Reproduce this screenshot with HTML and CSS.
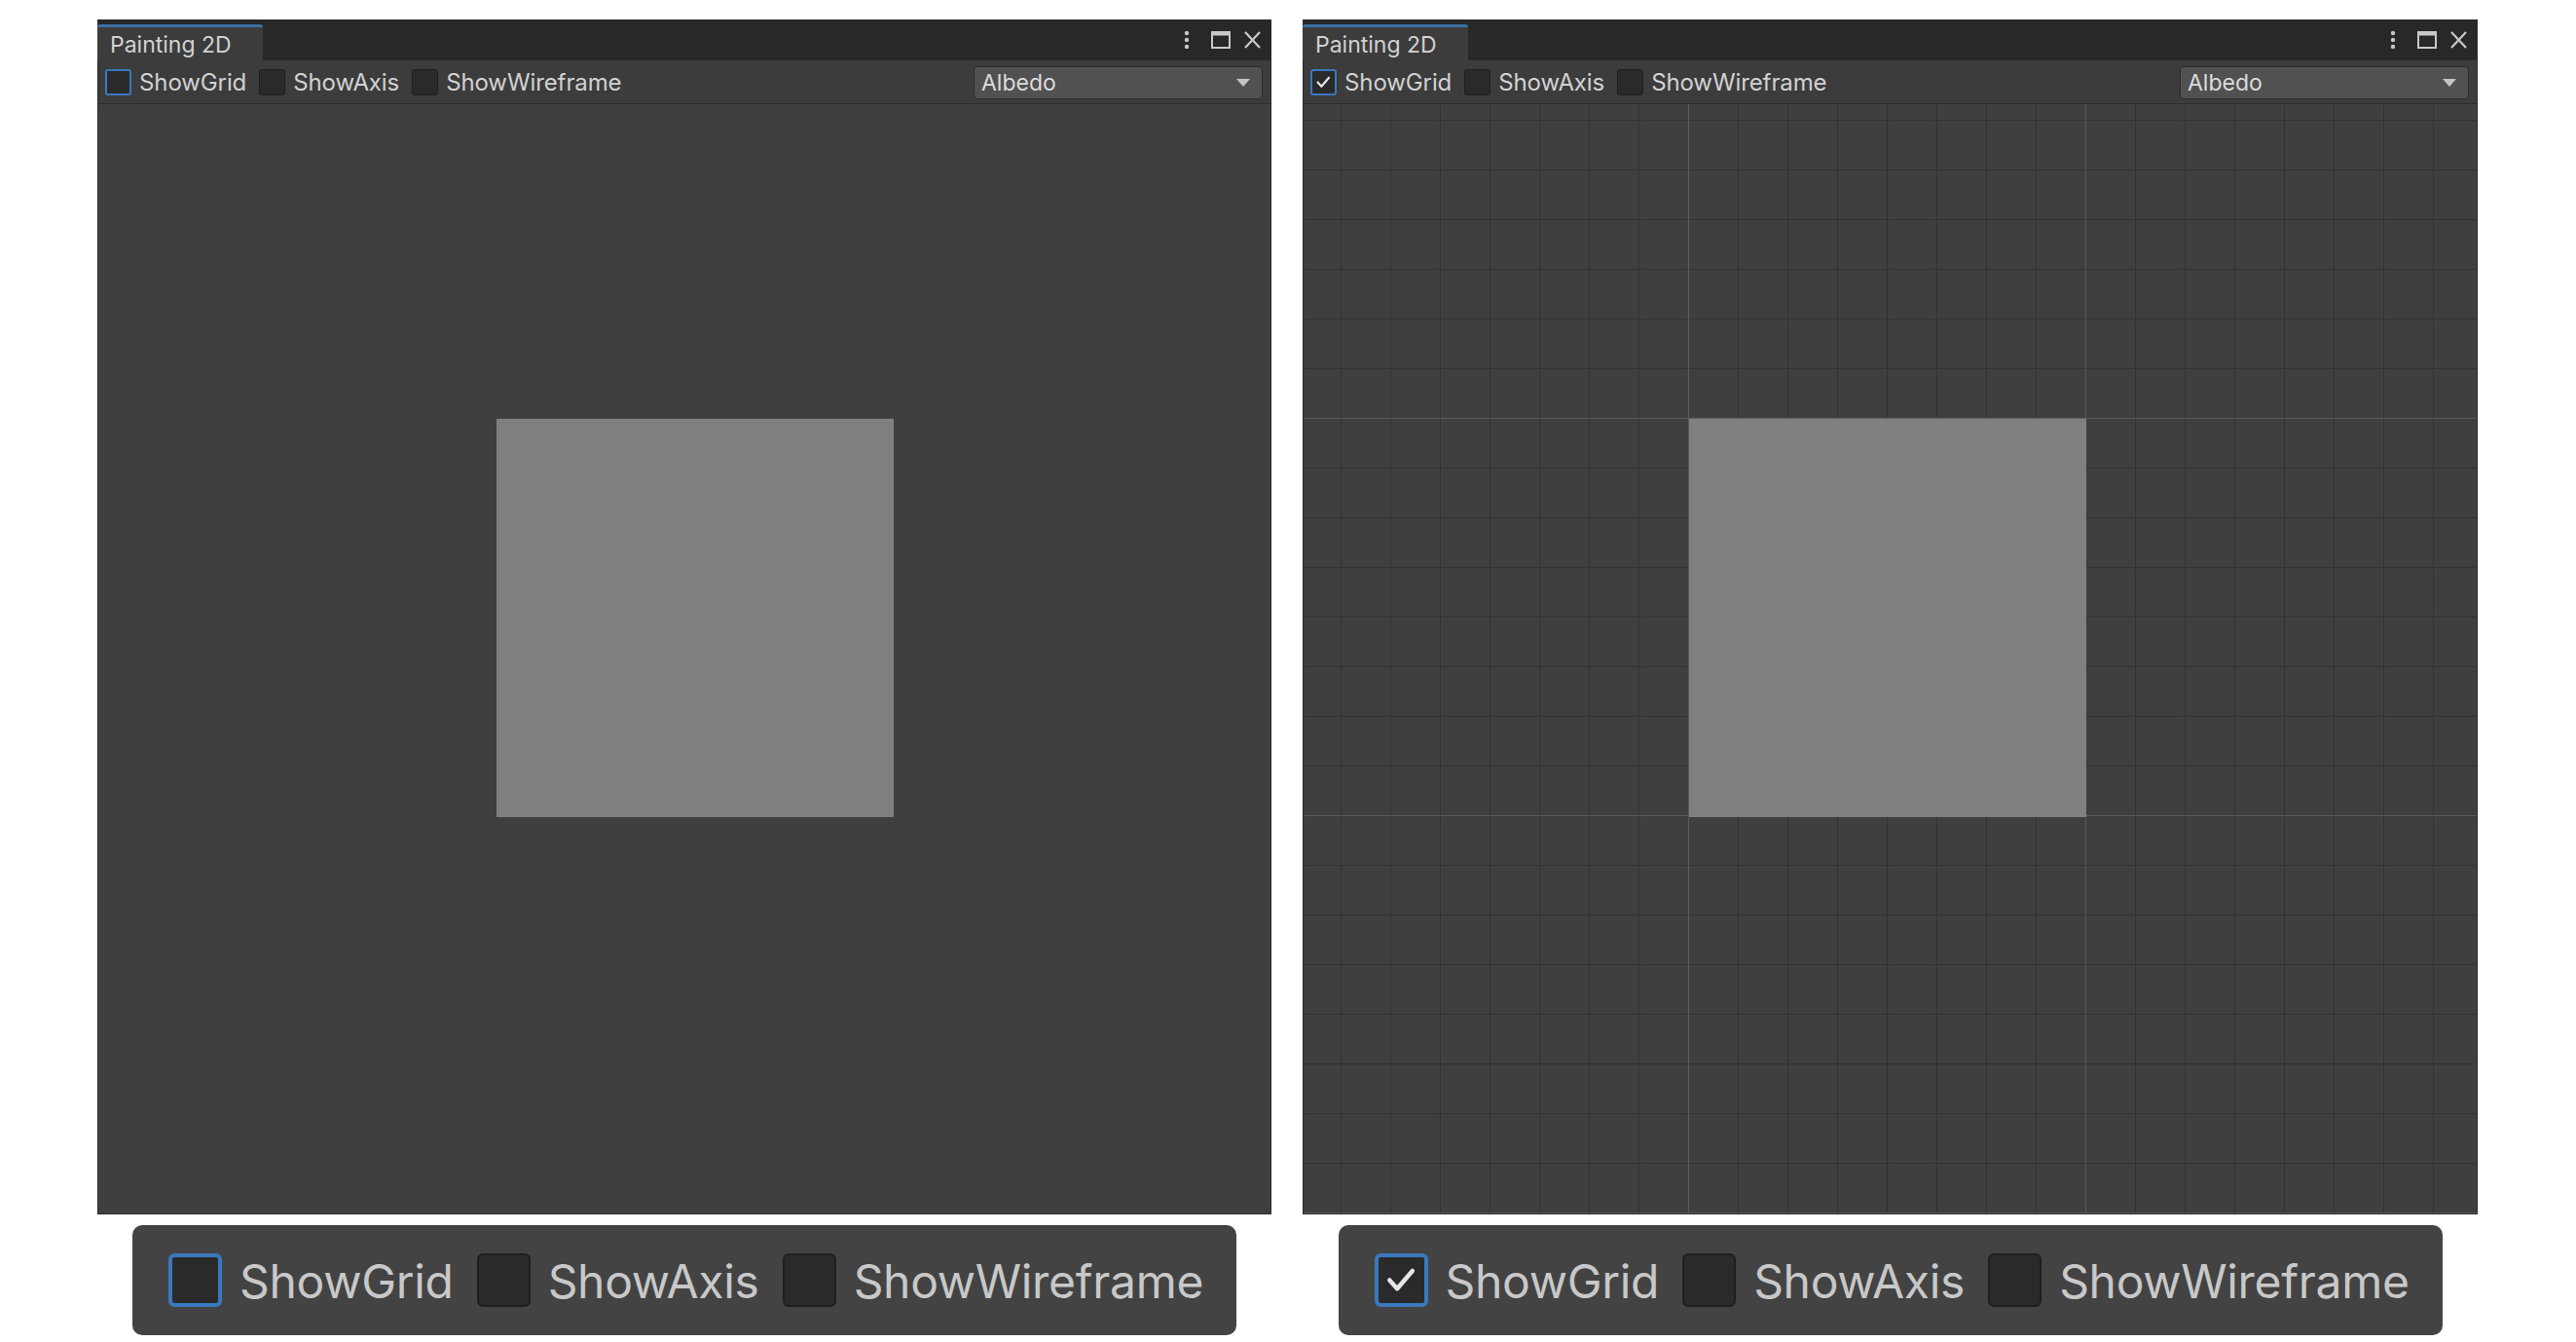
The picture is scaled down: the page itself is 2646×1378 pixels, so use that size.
FILE: index.html
```html
<!DOCTYPE html>
<html lang="en">
<head>
<meta charset="utf-8">
<title>Painting 2D</title>
<link rel="stylesheet" href="styles.css">
</head>
<body>
<div class="page">
  <section class="window">
    <header class="titlebar">
      <div class="tab">Painting 2D</div>
      <div class="win-icons">
        <svg class="ico-dots" width="12" height="20" viewBox="0 0 12 20"><circle cx="6" cy="3" r="2.2"/><circle cx="6" cy="10" r="2.2"/><circle cx="6" cy="17" r="2.2"/></svg>
        <svg class="ico-max" width="20" height="18" viewBox="0 0 20 18"><rect x="1" y="1" width="18" height="16" fill="none" stroke-width="2"/><rect x="1" y="1" width="18" height="3.5" stroke="none"/></svg>
        <svg class="ico-close" width="19" height="18" viewBox="0 0 19 18"><path d="M2 1 L17 17 M17 1 L2 17" fill="none" stroke-width="2.2"/></svg>
      </div>
    </header>
    <div class="toolbar">
      <label class="toggle"><span class="box focus"></span><span class="lbl">ShowGrid</span></label>
      <label class="toggle"><span class="box"></span><span class="lbl">ShowAxis</span></label>
      <label class="toggle"><span class="box"></span><span class="lbl">ShowWireframe</span></label>
      <div class="dropdown"><span>Albedo</span><svg width="14" height="8" viewBox="0 0 14 8"><polygon points="0,0 14,0 7,8"/></svg></div>
    </div>
    <div class="viewport plain">
      <div class="quad"></div>
    </div>
  </section>

  <section class="window">
    <header class="titlebar">
      <div class="tab">Painting 2D</div>
      <div class="win-icons">
        <svg class="ico-dots" width="12" height="20" viewBox="0 0 12 20"><circle cx="6" cy="3" r="2.2"/><circle cx="6" cy="10" r="2.2"/><circle cx="6" cy="17" r="2.2"/></svg>
        <svg class="ico-max" width="20" height="18" viewBox="0 0 20 18"><rect x="1" y="1" width="18" height="16" fill="none" stroke-width="2"/><rect x="1" y="1" width="18" height="3.5" stroke="none"/></svg>
        <svg class="ico-close" width="19" height="18" viewBox="0 0 19 18"><path d="M2 1 L17 17 M17 1 L2 17" fill="none" stroke-width="2.2"/></svg>
      </div>
    </header>
    <div class="toolbar">
      <label class="toggle"><span class="box focus"><svg viewBox="0 0 27 27"><polyline points="6.5,13.5 11,18.5 20,8" fill="none" stroke-width="2.6" stroke-linecap="round" stroke-linejoin="round"/></svg></span><span class="lbl">ShowGrid</span></label>
      <label class="toggle"><span class="box"></span><span class="lbl">ShowAxis</span></label>
      <label class="toggle"><span class="box"></span><span class="lbl">ShowWireframe</span></label>
      <div class="dropdown"><span>Albedo</span><svg width="14" height="8" viewBox="0 0 14 8"><polygon points="0,0 14,0 7,8"/></svg></div>
    </div>
    <div class="viewport grid">
      <div class="quad"></div>
    </div>
  </section>

  <div class="panel">
    <label class="toggle big"><span class="box focus"></span><span class="lbl">ShowGrid</span></label>
    <label class="toggle big"><span class="box"></span><span class="lbl">ShowAxis</span></label>
    <label class="toggle big"><span class="box"></span><span class="lbl">ShowWireframe</span></label>
  </div>

  <div class="panel">
    <label class="toggle big"><span class="box focus"><svg viewBox="0 0 27 27"><polyline points="6.5,13.5 11,18.5 20,8" fill="none" stroke-width="2.6" stroke-linecap="round" stroke-linejoin="round"/></svg></span><span class="lbl">ShowGrid</span></label>
    <label class="toggle big"><span class="box"></span><span class="lbl">ShowAxis</span></label>
    <label class="toggle big"><span class="box"></span><span class="lbl">ShowWireframe</span></label>
  </div>
</div>
</body>
</html>
```

FILE: styles.css
```css
* { box-sizing: border-box; }

html, body {
  margin: 0;
  padding: 0;
  background: #ffffff;
}

body {
  font-family: Inter, "Noto Sans", "DejaVu Sans", sans-serif;
  color: #d2d2d2;
}

.page {
  display: grid;
  grid-template-columns: 1206px 1207px;
  column-gap: 32px;
  row-gap: 11px;
  padding: 20px 0 0 100px;
}

/* ---------- editor window ---------- */
.window {
  height: 1227px;
  display: flex;
  flex-direction: column;
  background: #282828;
  border-left: 1px solid #2a2a2a;
  border-right: 1px solid #2a2a2a;
  border-bottom: 1px solid #2a2a2a;
}

.titlebar {
  height: 42px;
  flex: 0 0 auto;
  display: flex;
  align-items: flex-end;
  background: #282828;
}

.tab {
  width: 170px;
  height: 37px;
  margin-left: -1px;
  border-top: 3px solid #3b6fa4;
  border-radius: 3px 3px 0 0;
  background: #3c3c3c;
  padding: 1px 13px 0;
  display: flex;
  align-items: center;
  font-size: 23px;
  color: #d2d2d2;
  white-space: nowrap;
}

.win-icons {
  margin-left: auto;
  align-self: center;
  display: flex;
  align-items: center;
  padding-right: 9px;
}

.win-icons svg { display: block; fill: #c8c8c8; stroke: #c8c8c8; }
.ico-dots { margin-right: 19px; stroke: none !important; }
.ico-max { margin-right: 13px; }

.toolbar {
  height: 45px;
  flex: 0 0 auto;
  display: flex;
  align-items: center;
  gap: 13px;
  padding: 1px 8px 0 7px;
  background: #3c3c3c;
  border-bottom: 1px solid #2c2c2c;
}

/* ---------- toggles ---------- */
.toggle {
  display: flex;
  align-items: center;
  gap: 8px;
  font-size: 24px;
  letter-spacing: -0.1px;
  color: #d2d2d2;
  white-space: nowrap;
}

.box {
  width: 27px;
  height: 27px;
  flex: 0 0 auto;
  border: 1px solid #1f1f1f;
  border-radius: 3px;
  background: #2a2a2a;
  display: flex;
  align-items: center;
  justify-content: center;
}

.box.focus {
  border: 2px solid #3a78bd;
}

.box svg {
  width: 100%;
  height: 100%;
  stroke: #e6e6e6;
}

.toggle.big {
  gap: 18px;
  font-size: 48px;
  letter-spacing: -0.3px;
  color: #c8c8c8;
  padding-top: 2px;
}

.toggle.big .box {
  width: 55px;
  height: 55px;
  border-width: 2px;
  border-radius: 6px;
  margin-top: -2px;
}

.toggle.big .box.focus {
  border-width: 4px;
}

/* ---------- dropdown ---------- */
.dropdown {
  margin-left: auto;
  width: 297px;
  height: 34px;
  display: flex;
  align-items: center;
  justify-content: space-between;
  padding: 0 12px 0 7px;
  background: #515151;
  border: 1px solid #2a2a2a;
  border-radius: 4px;
  font-size: 23px;
  color: #dcdcdc;
}

.dropdown svg { fill: #c4c4c4; display: block; }

/* ---------- viewport ---------- */
.viewport {
  flex: 1 1 auto;
  background-color: #3f3f3f;
  padding-top: 323px;
}

.viewport.plain { padding-left: 409px; }

.viewport.grid {
  padding-left: 396px;
  background-image:
    linear-gradient(to right, #5b5b5b 1px, transparent 1px),
    linear-gradient(to bottom, #5b5b5b 1px, transparent 1px),
    linear-gradient(to right, #323232 1px, transparent 1px),
    linear-gradient(to bottom, #323232 1px, transparent 1px);
  background-size: 408px 408px, 408px 408px, 51px 51px, 51px 51px;
  background-position: 395px 0, 0 322px, 38px 0, 0 16px;
}

.quad {
  width: 408px;
  height: 409px;
  background: #808080;
}

/* ---------- bottom panels ---------- */
.panel {
  justify-self: center;
  width: 1134px;
  height: 113px;
  display: flex;
  align-items: center;
  gap: 24px;
  padding-left: 37px;
  background: #434343;
  border-radius: 10px;
}
```
